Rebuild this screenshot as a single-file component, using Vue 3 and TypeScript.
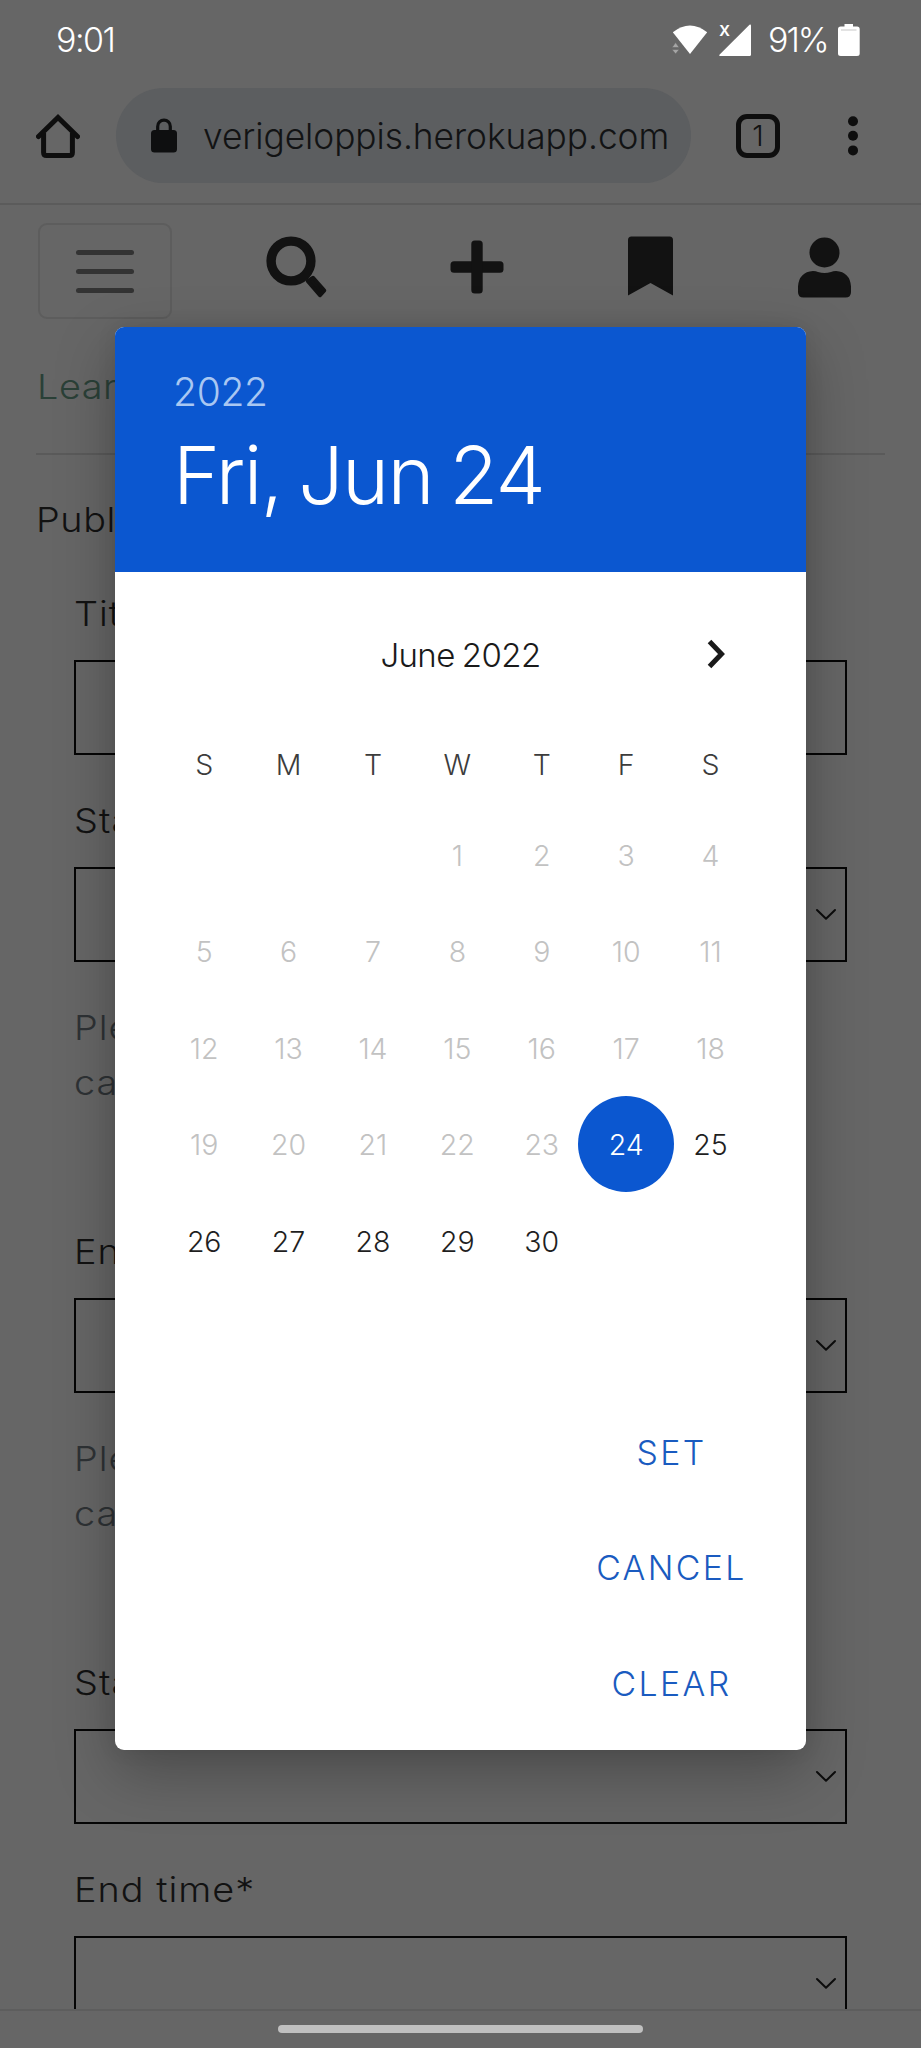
<script setup lang="ts">
interface Field {
  label: string
  select: boolean
  help?: string[]
}

interface Day {
  n: number | null
  state: 'empty' | 'past' | 'selected' | 'open'
}

// Labels behind the dialog hold only the part left of its edge.
const fields: Field[] = [
  { label: 'Tit', select: false },
  { label: 'Sta', select: true, help: ['Ple', 'ca'] },
  { label: 'En', select: true, help: ['Ple', 'ca'] },
  { label: 'Sta', select: true },
  { label: 'End time*', select: true },
]

const weekdays: string[] = ['S', 'M', 'T', 'W', 'T', 'F', 'S']
const firstWeekday = 3
const selected = 24

const days: Day[] = [
  ...Array.from({ length: firstWeekday }, (): Day => ({ n: null, state: 'empty' })),
  ...Array.from({ length: 30 }, (_, i): Day => {
    const n = i + 1
    return { n, state: n < selected ? 'past' : n === selected ? 'selected' : 'open' }
  }),
]

const actions: string[] = ['SET', 'CANCEL', 'CLEAR']
</script>

<template>
  <div class="screen">
    <header class="status">
      <span class="clock">9:01</span>
      <div class="status-right">
        <svg class="wifi" viewBox="0 0 36 30" width="36" height="30">
          <path d="M.8 7.2Q18-6.2 35.2 7.2L18 29Z" fill="#fff" />
          <path d="M0 22.5l3.6-5 3.6 5zM0 24.5l3.6 4.5 3.6-4.5z" fill="#a5a5a5" stroke="#666" stroke-width=".6" />
        </svg>
        <div class="signal">
          <span class="nosim">x</span>
          <svg viewBox="0 0 32 32" width="32" height="32"><path d="M30.500 .7Q32 0 32 1.600V30.500Q32 32 30.500 32H1Q-.4 32 .7 30.600Z" fill="#fff" /></svg>
        </div>
        <span class="percent">91%</span>
        <svg class="battery" viewBox="0 0 22 32" width="22" height="32">
          <path d="M6.500 0H15V2.500H19Q21.700 2.500 21.700 5.200V29.500Q21.700 32 19 32H2.700Q0 32 0 29.500V5.200Q0 2.500 2.700 2.500H6.500Z" fill="#fff" />
          <path d="M3 6H18.500" stroke="#d4d4d4" stroke-width="1.300" />
        </svg>
      </div>
    </header>

    <div class="toolbar">
      <svg class="home" viewBox="0 0 44 44" width="44" height="44" fill="none" stroke="#0e0e0e" stroke-width="5">
        <path d="M2.500 22.500L22 3.500L41.500 22.500" stroke-linecap="round" />
        <path d="M7.600 19V38.500Q7.600 41.500 10.600 41.500H33.400Q36.400 41.500 36.400 38.500V19" />
      </svg>
      <div class="omnibox">
        <svg class="lock" viewBox="0 0 26 35" width="26" height="35">
          <rect x="0" y="12" width="26" height="22.500" rx="3.500" fill="#0e0f10" />
          <path d="M6.700 13V8.400a6.300 6.300 0 0 1 12.600 0V13" fill="none" stroke="#0e0f10" stroke-width="3.200" />
        </svg>
        <span class="url">verigeloppis.herokuapp.com</span>
      </div>
      <span class="tabs">1</span>
      <svg class="dots" viewBox="0 0 12 42" width="12" height="42" fill="#0e0e0e">
        <circle cx="6" cy="6.200" r="5" /><circle cx="6" cy="20.800" r="5" /><circle cx="6" cy="35.400" r="5" />
      </svg>
    </div>

    <main class="page">
      <nav class="nav">
        <span class="burger"><i></i><i></i><i></i></span>
        <svg class="n-search" viewBox="0 0 62 62" width="62" height="62" stroke="#121212">
          <circle cx="25" cy="25" r="19.900" stroke-width="9.400" fill="none" />
          <path d="M41.500 45L47 41.500L58.500 54.500L54 59.500Z" fill="#121212" stroke-width="3.500" stroke-linejoin="round" />
        </svg>
        <svg class="n-plus" viewBox="0 0 54 54" width="54" height="54" fill="#121212">
          <rect x=".5" y="21.300" width="53" height="11.400" rx="3.500" /><rect x="21.300" y=".5" width="11.400" height="53" rx="3.500" />
        </svg>
        <svg class="n-mark" viewBox="0 0 45 60" width="45" height="60" fill="#121212">
          <path d="M0 59.500V4Q0 .5 3.500 .5H41.500Q45 .5 45 4V59.500L22.500 47Z" />
        </svg>
        <svg class="n-user" viewBox="0 0 53 61" width="53" height="61" fill="#121212">
          <circle cx="26.500" cy="15.500" r="15" />
          <path d="M0 55V49.500Q1 35 15 34Q18 34 20 35Q26.500 37 33 35Q35 34 38 34Q52 35 53 49.500V55Q53 60.500 47.500 60.500H5.500Q0 60.500 0 55Z" />
        </svg>
      </nav>

      <div class="learn"><span class="wide">Lear</span></div>
      <div class="publish"><span class="wide">Publ</span></div>

      <section class="form">
        <div v-for="(field, i) in fields" :key="i" class="field">
          <label><span class="wide">{{ field.label }}</span></label>
          <div class="box">
            <svg v-if="field.select" viewBox="0 0 22 13" width="22" height="13">
              <path d="M2 2L11 10.800L20 2" fill="none" stroke="#0c0c0c" stroke-width="2" stroke-linecap="round" stroke-linejoin="round" />
            </svg>
          </div>
          <div v-if="field.help" class="help">
            <div v-for="line in field.help" :key="line"><span class="wide">{{ line }}</span></div>
          </div>
        </div>
      </section>
    </main>

    <footer class="gesture"><i></i></footer>

    <div class="dialog">
      <div class="head">
        <div class="year">2022</div>
        <div class="date">Fri, Jun 24</div>
      </div>
      <div class="month">
        <span>June 2022</span>
        <svg viewBox="0 0 20 30" width="20" height="30">
          <path d="M2.500 2.500L14.500 15L2.500 27.500" fill="none" stroke="#1a1a1a" stroke-width="5" />
        </svg>
      </div>
      <div class="grid week">
        <span v-for="(w, i) in weekdays" :key="i">{{ w }}</span>
      </div>
      <div class="grid days">
        <span v-for="(d, i) in days" :key="i" :class="d.state"><b v-if="d.n">{{ d.n }}</b></span>
      </div>
      <div class="actions">
        <span v-for="a in actions" :key="a">{{ a }}</span>
      </div>
    </div>
  </div>
</template>

<style>
html, body { margin: 0; background: #666; }
</style>

<style scoped>
.screen {
  position: relative;
  width: 921px;
  height: 2048px;
  overflow: hidden;
  display: flex;
  flex-direction: column;
  background: #666;
  color: #121212;
  font-family: Inter, "Liberation Sans", sans-serif;
  font-weight: 300;
  white-space: nowrap;
}
svg { display: block; flex: none; }

.status {
  height: 79px;
  flex: none;
  box-sizing: border-box;
  padding: 0 61px 0 56px;
  display: flex;
  align-items: center;
  justify-content: space-between;
  color: #fff;
  font-size: 34px;
}
.clock { letter-spacing: -1.500px; }
.status-right { display: flex; align-items: center; }
.signal { position: relative; margin-left: 11px; }
.nosim { position: absolute; left: 0; top: -5px; font-size: 20px; line-height: 20px; font-weight: 500; }
.percent { margin-left: 17px; width: 60px; letter-spacing: -2px; }
.battery { margin-left: 10px; }

.toolbar {
  height: 126px;
  flex: none;
  box-sizing: border-box;
  padding: 9px 61px 20px 36px;
  display: flex;
  align-items: center;
  border-bottom: 2px solid #5b5b5b;
}
.omnibox {
  width: 575px;
  height: 95px;
  margin-left: 36px;
  border-radius: 48px;
  background: #5c5e60;
  box-sizing: border-box;
  padding-left: 35px;
  display: flex;
  align-items: center;
}
.url { margin-left: 26px; font-size: 35.300px; letter-spacing: -.05px; line-height: 50px; padding-top: 2px; color: #121314; }
.tabs {
  width: 44px;
  height: 44px;
  margin-left: 45px;
  box-sizing: border-box;
  border: 5px solid #0e0e0e;
  border-radius: 11px;
  font-size: 29px;
  line-height: 34px;
  text-align: center;
}
.dots { margin-left: 67px; }

.page { height: 1804px; overflow: hidden; flex: none; }
.nav { height: 133px; display: flex; align-items: center; padding-left: 38px; box-sizing: border-box; }
.burger {
  width: 134px;
  height: 96px;
  margin-top: -1px;
  box-sizing: border-box;
  border: 2px solid #5d5d5d;
  border-radius: 9px;
  display: flex;
  flex-direction: column;
  align-items: center;
  justify-content: center;
  gap: 14px;
}
.burger i { width: 58px; height: 5px; border-radius: 3px; background: #333; }
.n-search { margin-left: 94px; margin-top: -9px; }
.n-plus { margin-left: 122px; margin-top: -10px; }
.n-mark { margin-left: 124px; margin-top: -11px; }
.n-user { margin-left: 125px; margin-top: -9px; }

.wide { display: inline-block; transform: scaleX(1.097); transform-origin: 0 50%; }
.learn {
  height: 115px;
  margin: 0 36px;
  padding-left: 1px;
  border-bottom: 2px solid #5a5a5a;
  font-size: 34.500px;
  line-height: 97px;
  letter-spacing: .5px;
  color: #2a4037;
}
.publish { height: 112px; padding-left: 36px; font-size: 34.500px; line-height: 129px; letter-spacing: .5px; }

.form { padding: 0 74px; }
.field { font-size: 34.500px; letter-spacing: .9px; }
.field label { display: block; height: 93px; line-height: 93px; }
.field + .field { margin-top: 19px; }
.box {
  height: 95px;
  box-sizing: border-box;
  border: 2px solid #050505;
  display: flex;
  align-items: center;
  justify-content: flex-end;
  padding-right: 8px;
}
.help { height: 224px; box-sizing: border-box; padding-top: 38px; line-height: 55px; color: #2e3235; }

.gesture {
  height: 37px;
  border-top: 2px solid #5d5d5d;
  display: flex;
  justify-content: center;
}
.gesture i { width: 365px; height: 8px; margin-top: 14px; border-radius: 4px; background: #c0c0c0; }

.dialog {
  position: absolute;
  left: 115px;
  top: 327px;
  width: 691px;
  height: 1423px;
  border-radius: 9px;
  overflow: hidden;
  background: #fff;
  box-shadow: 0 22px 60px rgba(0, 0, 0, .27), 0 0 20px rgba(0, 0, 0, .08);
}
.head { height: 245px; background: #0b57d0; box-sizing: border-box; padding: 41px 0 0 58px; color: #fff; }
.year { font-size: 39px; line-height: 48px; letter-spacing: -.3px; color: #a9c7f2; }
.date { font-size: 80px; line-height: 100px; margin-top: 9px; letter-spacing: -1.600px; word-spacing: -4.500px; }
.month { position: relative; height: 166px; line-height: 166px; text-align: center; font-size: 33px; letter-spacing: -.6px; word-spacing: -1.500px; color: #1a1a1a; }
.month svg { position: absolute; left: 592px; top: 67px; }
.grid { display: grid; grid-template-columns: repeat(7, 84.4px); margin-left: 47px; text-align: center; }
.week { height: 52px; line-height: 53px; font-size: 28.500px; color: #3c3c3c; }
.days { grid-auto-rows: 96.500px; margin-top: 17.500px; font-size: 28.500px; line-height: 96px; }
.days b { font-weight: 300; }
.days span { display: flex; justify-content: center; align-items: center; }
.past { color: #c2c2c2; }
.open { color: #1f1f1f; }
.selected b { width: 96px; height: 96px; margin-top: -2px; line-height: 98px; flex: none; border-radius: 50%; background: #0b57d0; color: #fff; }
.actions {
  margin: 105px 56px 0 0;
  display: flex;
  flex-direction: column;
  align-items: flex-end;
  font-size: 33.800px;
  letter-spacing: 2.400px;
  color: #1a5bc0;
}
.actions span { width: 157px; height: 115.300px; line-height: 115px; text-align: center; }
</style>
